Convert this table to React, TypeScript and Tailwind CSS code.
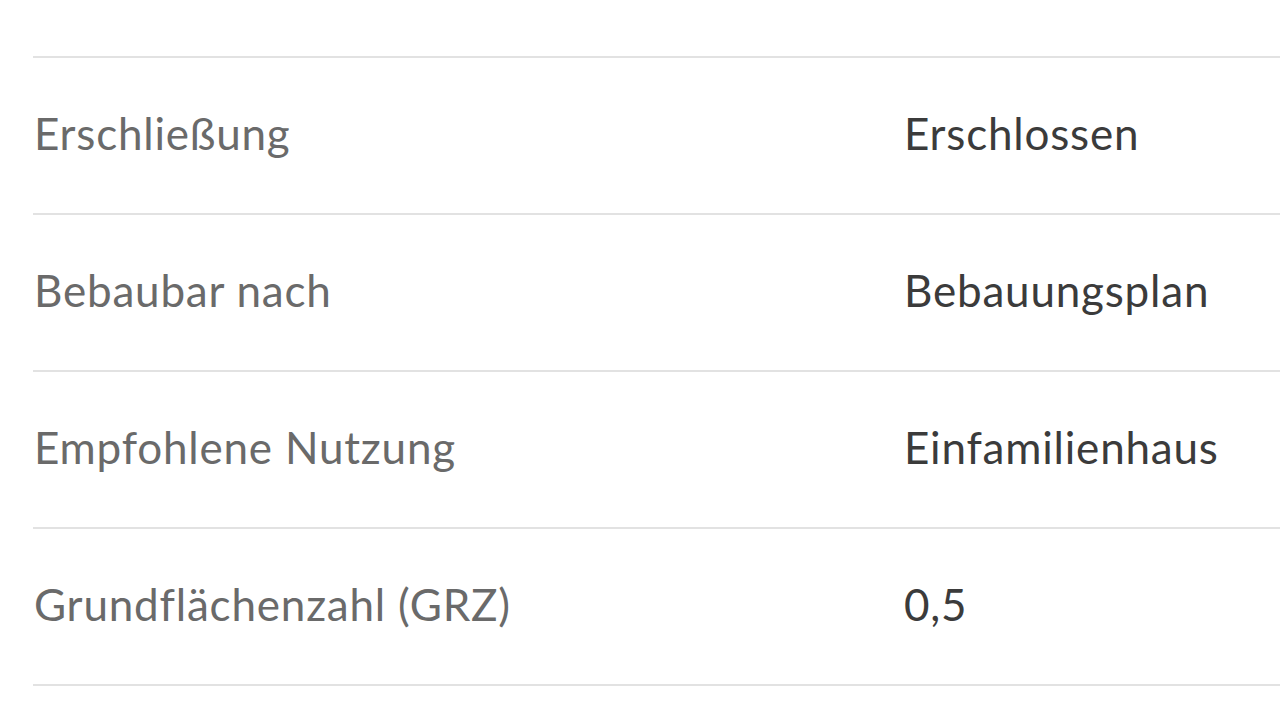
const rows = [
  { label: 'Grundstücksfläche', value: '650 m²' },
  { label: 'Erschließung', value: 'Erschlossen' },
  { label: 'Bebaubar nach', value: 'Bebauungsplan' },
  { label: 'Empfohlene Nutzung', value: 'Einfamilienhaus' },
  { label: 'Grundflächenzahl (GRZ)', value: '0,5' },
]

export default function App() {
  return (
    <div className="w-[1280px] h-[720px] overflow-hidden bg-white font-['Lato',sans-serif]">
      <div className="-mt-[99px] ml-[33px] w-[1300px]">
        {rows.map((r) => (
          <div
            key={r.label}
            className="flex items-center h-[157px] pb-[6px] border-b-2 border-[#e2e2e2] text-[44px] leading-none tracking-[0.8px]">
            <span className="w-[871px] pl-[1px] text-[#6a6a6a]">{r.label}</span>
            <span className="text-[#3b3b3b]">{r.value}</span>
          </div>
        ))}
      </div>
    </div>
  )
}
